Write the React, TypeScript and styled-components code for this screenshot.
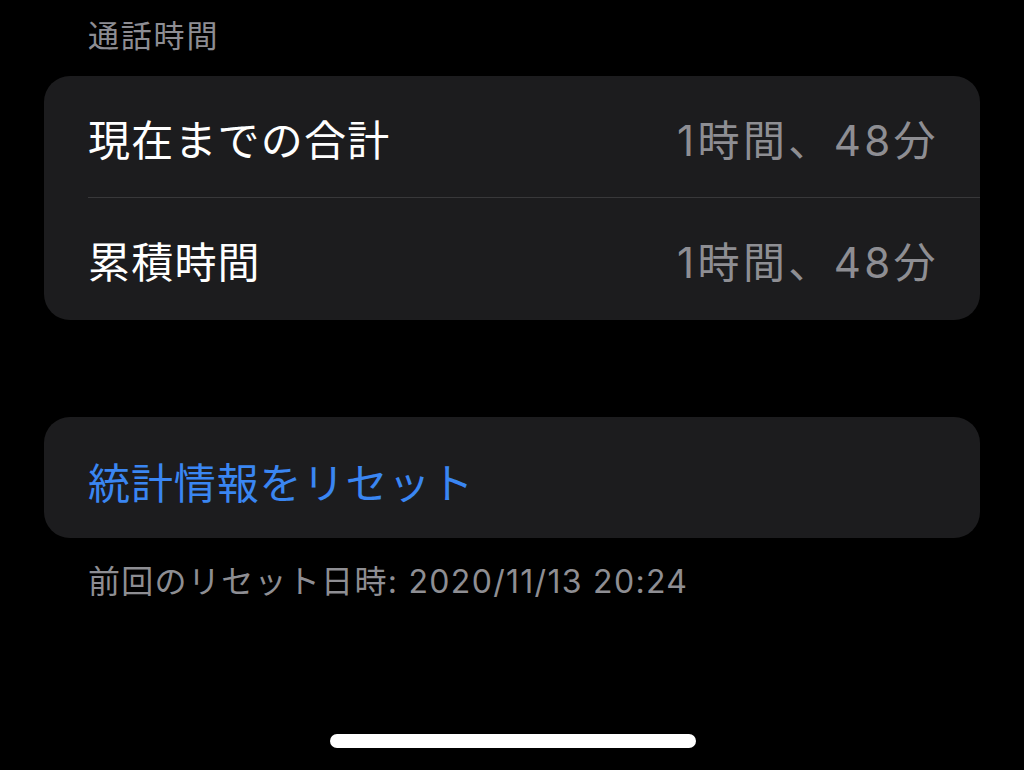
import styled, { createGlobalStyle } from "styled-components";

const GlobalStyle = createGlobalStyle`
  html, body {
    margin: 0;
    padding: 0;
    background: #000;
  }
  body {
    font-family: "Inter", "Noto Sans CJK JP", sans-serif;
    -webkit-font-smoothing: antialiased;
  }
`;

const Screen = styled.div`
  position: relative;
  width: 1024px;
  height: 770px;
  overflow: hidden;
  background: #000;
  padding: 16px 44px 0;
  box-sizing: border-box;
`;

const SectionHeader = styled.div`
  padding-left: 44px;
  font-size: 31px;
  line-height: 40px;
  letter-spacing: 1.8px;
  color: #8d8d93;
  margin-bottom: 20px;
`;

const Group = styled.div<{ $gapTop?: number }>`
  background: #1c1c1e;
  border-radius: 26px;
  overflow: hidden;
  margin-top: ${(p) => p.$gapTop ?? 0}px;
`;

const Row = styled.div<{ $divider?: boolean; $height?: number }>`
  position: relative;
  display: flex;
  align-items: center;
  justify-content: space-between;
  height: ${(p) => p.$height ?? 122}px;
  padding: 0 44px;
  box-sizing: border-box;

  ${(p) =>
    p.$divider &&
    `
    &::after {
      content: "";
      position: absolute;
      left: 44px;
      right: 0;
      bottom: 0;
      height: 1px;
      background: #38383a;
    }
  `}
`;

const Label = styled.span`
  font-size: 42px;
  color: #fff;
  letter-spacing: 1.2px;
`;

const Value = styled.span`
  font-size: 42px;
  color: #8e8e93;
  letter-spacing: 3.4px;
  margin-right: -3px;
`;

const ActionLabel = styled.span`
  font-size: 42px;
  color: #3a86f2;
  letter-spacing: 0.9px;
  padding-top: 6px;
`;

const Footnote = styled.div`
  padding-left: 44px;
  margin-top: 24px;
  font-size: 32px;
  line-height: 40px;
  letter-spacing: 1.3px;
  color: #8e8e93;
`;

const HomeIndicator = styled.div`
  position: absolute;
  left: 330px;
  bottom: 22px;
  width: 366px;
  height: 14px;
  border-radius: 7px;
  background: #fff;
`;

const stats = [
  { label: "現在までの合計", value: "1時間、48分" },
  { label: "累積時間", value: "1時間、48分" },
];

export default function App() {
  return (
    <>
      <GlobalStyle />
      <Screen>
        <SectionHeader>通話時間</SectionHeader>
        <Group>
          {stats.map((s, i) => (
            <Row key={i} $divider={i < stats.length - 1}>
              <Label>{s.label}</Label>
              <Value>{s.value}</Value>
            </Row>
          ))}
        </Group>
        <Group $gapTop={97}>
          <Row $height={121}>
            <ActionLabel>統計情報をリセット</ActionLabel>
          </Row>
        </Group>
        <Footnote>前回のリセット日時: 2020/11/13 20:24</Footnote>
        <HomeIndicator />
      </Screen>
    </>
  );
}
